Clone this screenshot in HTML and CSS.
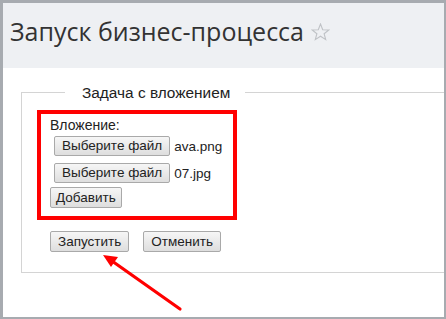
FILE: index.html
```html
<!DOCTYPE html>
<html lang="ru">
<head>
    <meta charset="UTF-8">
    <title>Запуск бизнес-процесса</title>
    <link rel="stylesheet" href="styles.css">
</head>
<body>
    <div class="frame">
        <div class="head">
            <h1 class="title">Запуск бизнес-процесса
                <svg class="star" width="19" height="18" viewBox="0 0 19 18">
                    <polygon points="9.5,1 11.7,6.7 17.8,6.9 13.1,10.7 14.7,16.6 9.5,13.2 4.3,16.6 5.9,10.7 1.2,6.9 7.3,6.7" fill="none" stroke="#bfc2c6" stroke-width="1.1"/>
                </svg>
            </h1>
        </div>
        <div class="content">
            <fieldset class="task">
                <legend>Задача с вложением</legend>
                <div class="attach">
                    <div class="attach-label">Вложение:</div>
                    <div class="file-row">
                        <button class="btn">Выберите файл</button>
                        <span class="file-name">ava.png</span>
                    </div>
                    <div class="file-row">
                        <button class="btn">Выберите файл</button>
                        <span class="file-name">07.jpg</span>
                    </div>
                    <div class="add-row">
                        <button class="btn">Добавить</button>
                    </div>
                </div>
                <div class="actions">
                    <button class="btn">Запустить</button>
                    <button class="btn">Отменить</button>
                </div>
            </fieldset>
            <!-- annotation arrow -->
            <svg class="arrow" width="446" height="319" viewBox="0 0 446 319">
                <line x1="180" y1="309" x2="112" y2="261" stroke="#f00" stroke-width="3.2" stroke-linecap="round"/>
                <polygon points="103,255 118,257 111,267" fill="#f00"/>
            </svg>
        </div>
    </div>
</body>
</html>
```

FILE: styles.css
```css
html, body {
    margin: 0;
    padding: 0;
    background: #fff;
}
.frame {
    position: relative;
    width: 446px;
    height: 319px;
    box-sizing: border-box;
    border: 3px solid #a7abb0;
    border-right-width: 2px;
    border-bottom-width: 2px;
    display: flex;
    flex-direction: column;
    overflow: hidden;
}
.head {
    height: 65px;
    background-color: #eef0f3;
    flex-shrink: 0;
}
.title {
    margin: 0;
    padding: 11px 0 0 7px;
    font-family: "Open Sans", sans-serif;
    font-weight: 400;
    font-size: 25px;
    line-height: 34px;
    color: #333;
    display: flex;
    align-items: center;
    gap: 7px;
}
.star {
    margin-top: 2px;
}
.content {
    flex: 1;
    background: #fff;
    padding: 16px 0 0 18px;
    overflow: hidden;
}
.task {
    margin: 0 -2px 0 0;
    padding: 0 0 20px 15px;
    border: 1px solid #d4d4d4;
    font-family: "Liberation Sans", Arial, sans-serif;
}
.task legend {
    margin-left: 28px;
    padding: 0 15px 0 17px;
    font-size: 15.4px;
    line-height: 17px;
    color: #222;
}
.attach {
    width: 183px;
    margin-top: 9px;
    padding: 3px 0 8px 9px;
    border: 4px solid #f00;
    display: flex;
    flex-direction: column;
    align-items: flex-start;
}
.attach-label {
    font-size: 14px;
    line-height: 17px;
    color: #222;
}
.file-row {
    display: flex;
    align-items: center;
    gap: 4px;
    margin: 2px 0 0 4px;
}
.file-row + .file-row {
    margin-top: 7px;
}
.file-name {
    font-size: 13.5px;
    color: #222;
}
.add-row {
    margin-top: 4px;
}
.btn {
    font-family: "Liberation Sans", Arial, sans-serif;
    font-size: 13.5px;
    line-height: 16px;
    height: 20px;
    padding: 0 7px;
    color: #222;
    background: linear-gradient(#f6f6f6, #dedede);
    border: 1px solid #a9a9a9;
    border-radius: 2px;
}
.add-row .btn {
    height: 21px;
    padding: 0 5px;
}
.actions {
    display: flex;
    gap: 14px;
    margin-top: 11px;
    margin-left: 13px;
}
.actions .btn {
    height: 21px;
    padding: 0 7px;
}
.arrow {
    position: absolute;
    left: -3px;
    top: -3px;
    pointer-events: none;
}
```
